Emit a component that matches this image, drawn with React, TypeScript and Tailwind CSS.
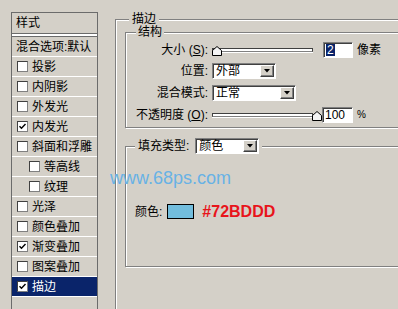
import React from "react";

type Layer = { label: string; checked?: boolean; indent?: boolean; active?: boolean };

const layers: Layer[] = [
  { label: "投影" },
  { label: "内阴影" },
  { label: "外发光" },
  { label: "内发光", checked: true },
  { label: "斜面和浮雕" },
  { label: "等高线", indent: true },
  { label: "纹理", indent: true },
  { label: "光泽" },
  { label: "颜色叠加" },
  { label: "渐变叠加", checked: true },
  { label: "图案叠加" },
  { label: "描边", checked: true, active: true },
];

// classic win98 checkbox
function Check({ checked }: { checked?: boolean }) {
  return (
    <span className="flex h-[11px] w-[11px] shrink-0 items-center justify-center border border-[#404040] border-r-[#808080] border-b-[#808080] bg-white">
      {checked && (
        <svg width="9" height="9" viewBox="0 0 9 9">
          <path d="M1.5 4.2 L3.5 6.3 L7.5 2" stroke="#000" strokeWidth="1.4" fill="none" />
        </svg>
      )}
    </span>
  );
}

function Arrow() {
  return (
    <span className="mr-[1px] flex h-[12px] w-[14px] shrink-0 items-center justify-center border border-white border-r-[#404040] border-b-[#404040] bg-[#d4d0c8] shadow-[inset_-1px_-1px_0_#808080]">
      <svg width="6" height="4" viewBox="0 0 6 4">
        <path d="M0 0 H6 L3 3.5 Z" fill="#000" />
      </svg>
    </span>
  );
}

function Dropdown({ value, w }: { value: string; w: string }) {
  return (
    <div
      className={`flex h-[16px] ${w} shrink-0 items-center border border-[#808080] border-r-white border-b-white bg-white shadow-[inset_1px_1px_0_#404040]`}
    >
      <span className="flex-1 pl-[3px] leading-[14px]">{value}</span>
      <Arrow />
    </div>
  );
}

function Slider({ at }: { at: number }) {
  return (
    <div className="relative flex h-[12px] w-[101px] shrink-0 items-center">
      <div className="h-[4px] w-full border border-[#404040] border-b-[#808080] bg-white shadow-[0_1px_0_#fff]" />
      <svg
        width="10"
        height="10"
        viewBox="0 0 10 10"
        className="absolute top-[2px]"
        style={{ left: at }}
      >
        <path d="M0.5 4.5 L5 0.5 L9.5 4.5 V9.5 H0.5 Z" fill="#f4f4f4" stroke="#000" strokeWidth="1" />
      </svg>
    </div>
  );
}

function Field({ children, w }: { children: React.ReactNode; w: string }) {
  return (
    <div
      className={`flex h-[16px] ${w} shrink-0 items-center border border-[#808080] border-r-white border-b-white bg-white pl-[2px] shadow-[inset_1px_1px_0_#404040]`}
    >
      {children}
    </div>
  );
}

export default function App() {
  return (
    <div className="relative flex h-[309px] w-[398px] overflow-hidden bg-[#d4d0c8] font-['Liberation_Sans','Noto_Sans_CJK_SC',sans-serif] text-[12px] leading-[14px] text-black">
      {/* left list of styles */}
      <div className="ml-[11px] mt-[12px] h-[320px] w-[87px] shrink-0 border border-[#6b6b6b]">
        <div className="flex h-[20px] items-center pl-[4px]">样式</div>
        <div className="h-[4px] border-y border-[#6b6b6b] bg-white" />
        <div className="flex h-[20px] items-center border-b border-white pl-[4px] whitespace-nowrap">
          混合选项:默认
        </div>
        {layers.map((l, i) => (
          <div
            key={i}
            className={`flex h-[20px] items-center gap-[4px] border-b border-white whitespace-nowrap ${
              l.indent ? "pl-[17px]" : "pl-[5px]"
            } ${l.active ? "bg-[#0a246a] text-white" : ""}`}
          >
            <Check checked={l.checked} />
            <span>{l.label}</span>
          </div>
        ))}
      </div>

      {/* stroke group */}
      <div className="relative ml-[17px] mt-[19px] h-[320px] w-[300px] shrink-0 border border-[#808080] pl-[9px] pt-[12px] shadow-[inset_1px_1px_0_#fff,1px_1px_0_#fff]">
        <span className="absolute left-[13px] top-[-8px] bg-[#d4d0c8] px-[3px]">描边</span>

        {/* 结构 */}
        <div className="relative h-[96px] w-[290px] border border-[#808080] pt-[9px] shadow-[inset_1px_1px_0_#fff,1px_1px_0_#fff]">
          <span className="absolute left-[10px] top-[-8px] bg-[#d4d0c8] px-[2px]">结构</span>

          <div className="flex h-[16px] items-center">
            <span className="w-[82px] text-right whitespace-nowrap">
              大小 (<span className="underline">S</span>):
            </span>
            <div className="ml-[4px]">
              <Slider at={0} />
            </div>
            <div className="ml-[10px]">
              <Field w="w-[30px]">
                <span className="bg-[#0a246a] px-[1px] leading-[12px] text-white">2</span>
              </Field>
            </div>
            <span className="ml-[4px]">像素</span>
          </div>

          <div className="mt-[5px] flex h-[16px] items-center">
            <span className="w-[82px] text-right">位置:</span>
            <div className="ml-[4px]">
              <Dropdown value="外部" w="w-[64px]" />
            </div>
          </div>

          <div className="mt-[6px] flex h-[16px] items-center">
            <span className="w-[82px] text-right">混合模式:</span>
            <div className="ml-[4px]">
              <Dropdown value="正常" w="w-[84px]" />
            </div>
          </div>

          <div className="mt-[6px] flex h-[16px] items-center">
            <span className="w-[82px] text-right whitespace-nowrap">
              不透明度 (<span className="underline">O</span>):
            </span>
            <div className="ml-[4px]">
              <Slider at={100} />
            </div>
            <div className="ml-[9px]">
              <Field w="w-[31px]">
                <span>100</span>
              </Field>
            </div>
            <span className="ml-[4px] text-[10px]">%</span>
          </div>
        </div>

        {/* 填充类型 */}
        <div className="relative mt-[18px] h-[121px] w-[290px] border border-[#808080] pl-[9px] pt-[57px] shadow-[inset_1px_1px_0_#fff,1px_1px_0_#fff]">
          <div className="absolute left-[9px] top-[-9px] flex items-center bg-[#d4d0c8] px-[3px]">
            <span>填充类型:</span>
            <div className="ml-[6px]">
              <Dropdown value="颜色" w="w-[64px]" />
            </div>
          </div>

          <div className="flex h-[15px] items-center">
            <span>颜色:</span>
            <span className="ml-[5px] h-[15px] w-[27px] border border-black bg-[#72BDDD]" />
            <span className="ml-[8px] text-[16px] font-bold leading-[16px] text-[#e8141b]">#72BDDD</span>
          </div>
        </div>
      </div>

      {/* watermark */}
      <span className="absolute left-[110px] top-[168px] text-[18px] leading-[20px] text-[#68b2e5]">
        www.68ps.com
      </span>
    </div>
  );
}
